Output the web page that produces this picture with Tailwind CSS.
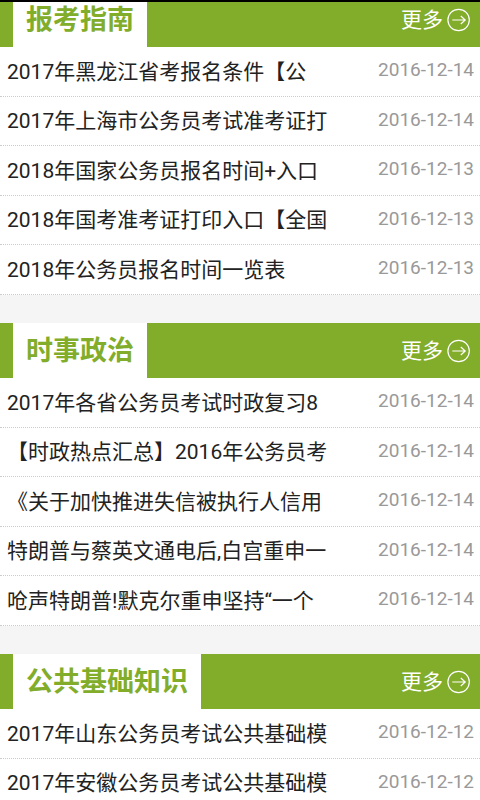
<!DOCTYPE html>
<html lang="zh-CN">
<head>
  <meta charset="UTF-8">
  <meta name="viewport" content="width=device-width, initial-scale=1.0">
  <title>公务员考试</title>
  <script src="https://cdn.jsdelivr.net/npm/@tailwindcss/browser@4"></script>
</head>
<body class="h-screen overflow-hidden bg-[#f5f5f5] font-[Roboto,'Noto_Sans_CJK_SC',sans-serif] text-[21px] text-[#222]">
  <svg class="hidden">
    <symbol id="arrow" viewBox="0 0 24 24" fill="none" stroke="currentColor" stroke-width="1.2">
      <circle cx="11.6" cy="12" r="10.7"/>
      <path d="M5.3 12H18M13.8 8l4.4 4-4.4 4"/>
    </symbol>
  </svg>
  <main class="h-full overflow-hidden border-t-2 border-black">
    <!-- 报考指南 -->
    <section class="-mt-[10px] mb-7">
      <div class="flex h-[55px] justify-between bg-[#82ad2b] pl-[13px] pr-[9px]">
        <h2 class="bg-white px-[13px] text-[27px] leading-[57px] font-bold text-[#82ad2b]">报考指南</h2>
        <a href="#" class="flex items-center gap-1 text-white"><span class="pt-[2px]">更多</span><svg class="size-6"><use href="#arrow"/></svg></a>
      </div>
      <ul class="grid h-[248px] auto-rows-fr bg-white">
        <li class="flex items-center justify-between border-b border-dotted border-[#ccc] pt-[2px] pr-[6px] pl-[7px]"><a href="#">2017年黑龙江省考报名条件【公</a><span class="pb-1 text-[19px] text-[#999]">2016-12-14</span></li>
        <li class="flex items-center justify-between border-b border-dotted border-[#ccc] pt-[2px] pr-[6px] pl-[7px]"><a href="#">2017年上海市公务员考试准考证打</a><span class="pb-1 text-[19px] text-[#999]">2016-12-14</span></li>
        <li class="flex items-center justify-between border-b border-dotted border-[#ccc] pt-[2px] pr-[6px] pl-[7px]"><a href="#">2018年国家公务员报名时间+入口</a><span class="pb-1 text-[19px] text-[#999]">2016-12-13</span></li>
        <li class="flex items-center justify-between border-b border-dotted border-[#ccc] pt-[2px] pr-[6px] pl-[7px]"><a href="#">2018年国考准考证打印入口【全国</a><span class="pb-1 text-[19px] text-[#999]">2016-12-13</span></li>
        <li class="flex items-center justify-between border-b border-dotted border-[#ccc] pt-[2px] pr-[6px] pl-[7px]"><a href="#">2018年公务员报名时间一览表</a><span class="pb-1 text-[19px] text-[#999]">2016-12-13</span></li>
      </ul>
    </section>
    <!-- 时事政治 -->
    <section class="mb-7">
      <div class="flex h-[55px] justify-between bg-[#82ad2b] pl-[13px] pr-[9px]">
        <h2 class="bg-white px-[13px] text-[27px] leading-[57px] font-bold text-[#82ad2b]">时事政治</h2>
        <a href="#" class="flex items-center gap-1 text-white"><span class="pt-[2px]">更多</span><svg class="size-6"><use href="#arrow"/></svg></a>
      </div>
      <ul class="grid h-[248px] auto-rows-fr bg-white">
        <li class="flex items-center justify-between border-b border-dotted border-[#ccc] pt-[2px] pr-[6px] pl-[7px]"><a href="#">2017年各省公务员考试时政复习8</a><span class="pb-1 text-[19px] text-[#999]">2016-12-14</span></li>
        <li class="flex items-center justify-between border-b border-dotted border-[#ccc] pt-[2px] pr-[6px] pl-[7px]"><a href="#">【时政热点汇总】2016年公务员考</a><span class="pb-1 text-[19px] text-[#999]">2016-12-14</span></li>
        <li class="flex items-center justify-between border-b border-dotted border-[#ccc] pt-[2px] pr-[6px] pl-[7px]"><a href="#">《关于加快推进失信被执行人信用</a><span class="pb-1 text-[19px] text-[#999]">2016-12-14</span></li>
        <li class="flex items-center justify-between border-b border-dotted border-[#ccc] pt-[2px] pr-[6px] pl-[7px]"><a href="#">特朗普与蔡英文通电后,白宫重申一</a><span class="pb-1 text-[19px] text-[#999]">2016-12-14</span></li>
        <li class="flex items-center justify-between border-b border-dotted border-[#ccc] pt-[2px] pr-[6px] pl-[7px]"><a href="#">呛声特朗普!默克尔重申坚持“一个</a><span class="pb-1 text-[19px] text-[#999]">2016-12-14</span></li>
      </ul>
    </section>
    <!-- 公共基础知识 -->
    <section>
      <div class="flex h-[55px] justify-between bg-[#82ad2b] pl-[13px] pr-[9px]">
        <h2 class="bg-white px-[13px] text-[27px] leading-[57px] font-bold text-[#82ad2b]">公共基础知识</h2>
        <a href="#" class="flex items-center gap-1 text-white"><span class="pt-[2px]">更多</span><svg class="size-6"><use href="#arrow"/></svg></a>
      </div>
      <ul class="grid h-[99px] auto-rows-fr bg-white">
        <li class="flex items-center justify-between border-b border-dotted border-[#ccc] pt-[2px] pr-[6px] pl-[7px]"><a href="#">2017年山东公务员考试公共基础模</a><span class="pb-1 text-[19px] text-[#999]">2016-12-12</span></li>
        <li class="flex items-center justify-between border-b border-dotted border-[#ccc] pt-[2px] pr-[6px] pl-[7px]"><a href="#">2017年安徽公务员考试公共基础模</a><span class="pb-1 text-[19px] text-[#999]">2016-12-12</span></li>
      </ul>
    </section>
  </main>
</body>
</html>
